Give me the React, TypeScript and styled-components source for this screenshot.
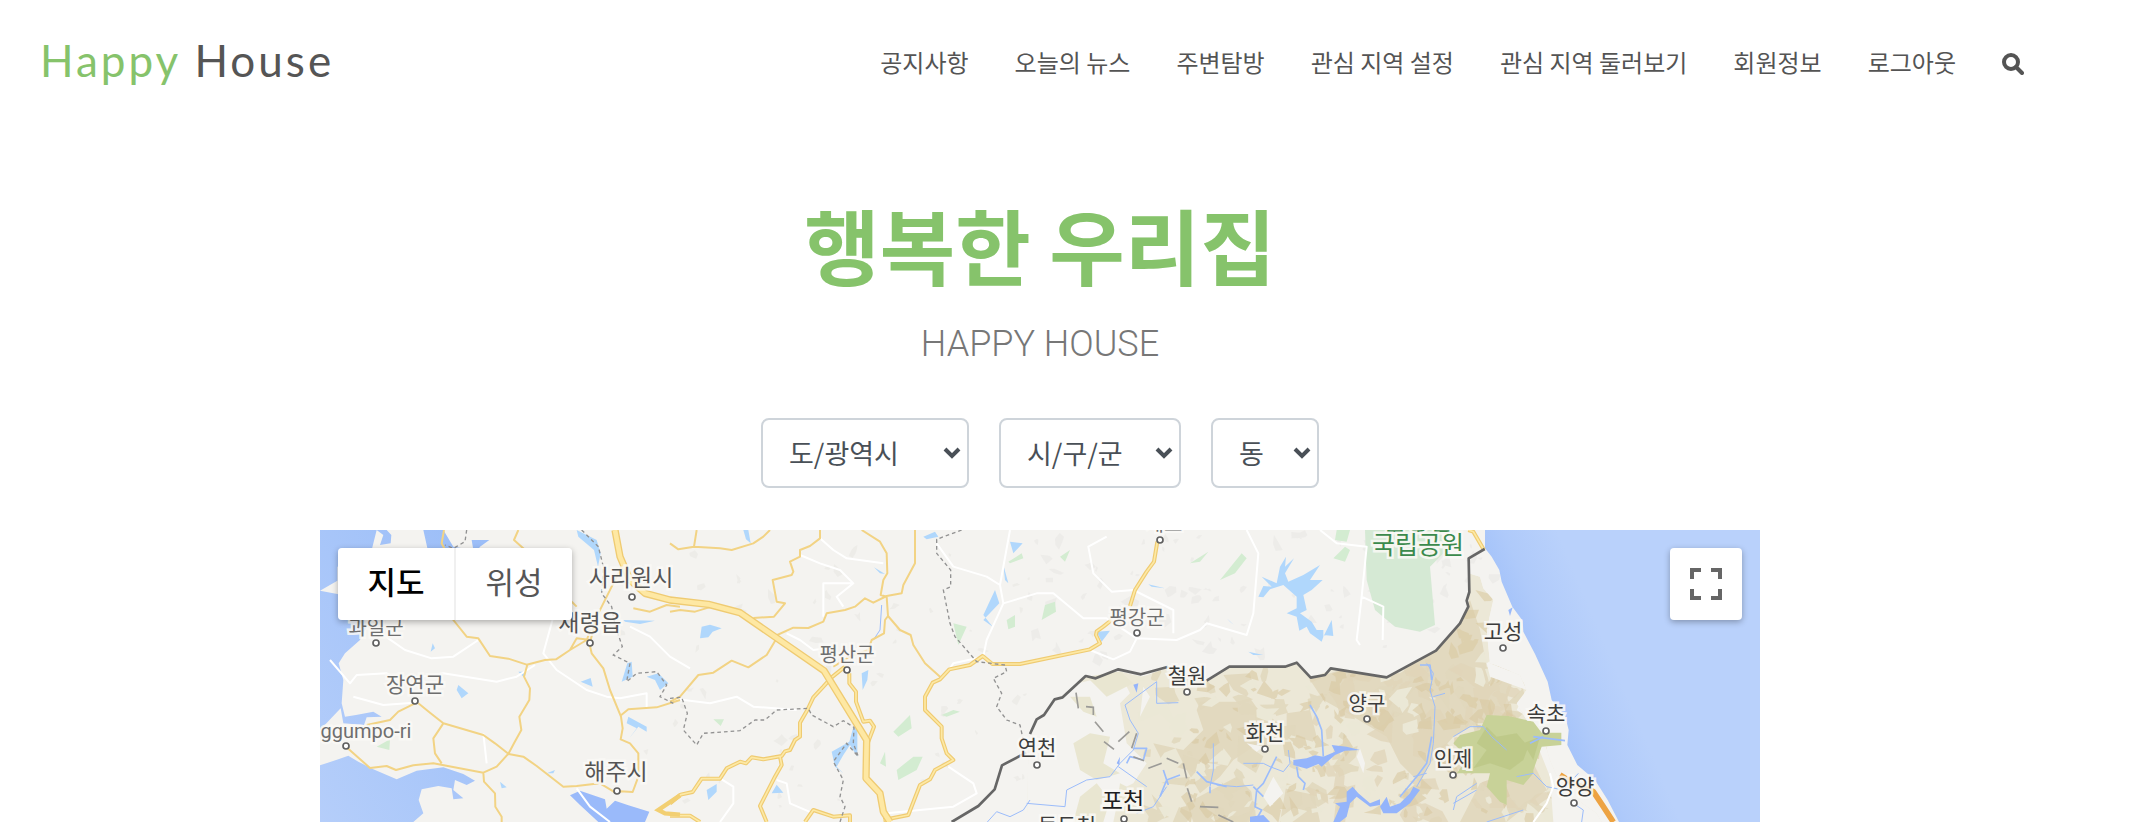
import React from 'react';
import styled, { createGlobalStyle } from 'styled-components';

const GlobalStyle = createGlobalStyle`
  *, *::before, *::after { box-sizing: border-box; }
  body {
    margin: 0;
    background: #fff;
    color: #545454;
    font-family: Roboto, 'Noto Sans CJK KR', sans-serif;
  }
`;

const Page = styled.div`
  display: flex;
  flex-direction: column;
  min-height: 100vh;
  padding-right: 54px;
  overflow: hidden;
`;

const Header = styled.header`
  display: flex;
  align-items: center;
  justify-content: space-between;
  height: 124px;
  padding: 0 56px 0 40px;
`;

const Brand = styled.a`
  padding-bottom: 4px;
  color: #555;
  font-family: Lato, sans-serif;
  font-size: 44px;
  line-height: 56px;
  letter-spacing: 3px;
  text-decoration: none;
  white-space: nowrap;
`;

const BrandAccent = styled.span`
  color: #86c36b;
`;

const Nav = styled.nav`
  display: flex;
  align-items: center;
  gap: 46px;
`;

const NavLink = styled.a`
  color: #545454;
  font-family: 'Noto Sans CJK KR', sans-serif;
  font-size: 24px;
  line-height: 36px;
  text-decoration: none;
  white-space: nowrap;
`;

const SearchButton = styled.button`
  display: flex;
  padding: 4px 0 0;
  border: 0;
  background: none;
  color: #545454;
  cursor: pointer;
`;

const Main = styled.main`
  display: flex;
  flex: 1;
  flex-direction: column;
  align-items: center;
`;

const Title = styled.h1`
  margin: 60px 0 0;
  color: #86c36b;
  font-family: 'Noto Sans CJK KR', sans-serif;
  font-size: 82px;
  font-weight: 700;
  line-height: 120px;
`;

const Subtitle = styled.p`
  margin: 16px 0 0;
  color: #777;
  font-size: 36px;
  font-weight: 300;
  line-height: 48px;
`;

const Filters = styled.form`
  display: flex;
  gap: 30px;
  margin: 50px 0 42px;
`;

const SelectBox = styled.div`
  display: grid;
  align-items: center;
  & > * { grid-area: 1 / 1; }
`;

const Select = styled.select<{ $width: number }>`
  width: ${(p) => p.$width}px;
  height: 70px;
  padding: 0 32px 2px 26px;
  appearance: none;
  border: 2px solid #ced4da;
  border-radius: 8px;
  background: #fff;
  color: #495057;
  font-family: 'Noto Sans CJK KR', sans-serif;
  font-size: 27px;
`;

const SelectArrow = styled.svg`
  justify-self: end;
  margin-right: 8px;
  pointer-events: none;
`;

const MapFrame = styled.section`
  position: relative;
  flex: 1;
  width: 100%;
  max-width: 1440px;
  min-height: 292px;
  overflow: hidden;
  background: #f4f3f0;
`;

const MapCanvas = styled.svg`
  position: absolute;
  top: 0;
  left: 0;
  width: 1440px;
  height: 292px;
`;

const Place = styled.span<{ $x: number; $y: number; $size: number; $color: string }>`
  position: absolute;
  left: ${(p) => p.$x}px;
  top: ${(p) => p.$y}px;
  transform: translate(-50%, -50%);
  color: ${(p) => p.$color};
  font-family: Roboto, 'Noto Sans CJK KR', sans-serif;
  font-size: ${(p) => p.$size}px;
  line-height: 28px;
  white-space: nowrap;
  -webkit-text-stroke: 5px rgba(250, 249, 246, 0.85);
  paint-order: stroke fill;
`;

const MapControls = styled.div`
  position: absolute;
  inset: 18px 18px auto;
  display: flex;
  justify-content: space-between;
`;

const MapTypes = styled.div`
  display: flex;
  border-radius: 4px;
  box-shadow: 0 2px 6px rgba(0, 0, 0, 0.3);
`;

const ControlButton = styled.button<{ $active?: boolean }>`
  height: 72px;
  padding: 0 0 6px;
  border: 0;
  background: #fff;
  color: ${(p) => (p.$active ? '#000' : '#565656')};
  font-family: 'Noto Sans CJK KR', sans-serif;
  font-size: 31px;
  font-weight: ${(p) => (p.$active ? 500 : 400)};
  line-height: 44px;
  cursor: pointer;
`;

const TypeButton = styled(ControlButton)`
  width: 117px;
  &:first-child { width: 116px; border-radius: 4px 0 0 4px; }
  &:last-child { width: 118px; border-left: 2px solid #f0f0f0; border-radius: 0 4px 4px 0; }
`;

const FullscreenButton = styled(ControlButton)`
  display: flex;
  align-items: center;
  justify-content: center;
  width: 72px;
  padding: 0;
  border-radius: 4px;
  box-shadow: 0 2px 6px rgba(0, 0, 0, 0.3);
`;

const NAV = ['공지사항', '오늘의 뉴스', '주변탐방', '관심 지역 설정', '관심 지역 둘러보기', '회원정보', '로그아웃'];

const FILTERS = [
  { label: '도/광역시', width: 208 },
  { label: '시/구/군', width: 182 },
  { label: '동', width: 108 },
];

const DARK = '#3c3c3c';
const MID = '#555';
const SOFT = '#6e6e6e';
const PARK = '#3b8a4c';

type PlaceData = { name: string; x: number; y: number; size: number; color: string; dot?: [number, number] };

const PLACES: PlaceData[] = [
  { name: '사리원시', x: 311, y: 49, size: 23, color: MID, dot: [312, 67] },
  { name: '재령읍', x: 270, y: 94, size: 23, color: MID, dot: [270, 113] },
  { name: '과일군', x: 56, y: 98, size: 20, color: SOFT, dot: [56, 113] },
  { name: '장연군', x: 95, y: 155, size: 21, color: SOFT, dot: [95, 171] },
  { name: 'ggumpo-ri', x: 46, y: 201, size: 20, color: SOFT, dot: [26, 216] },
  { name: '해주시', x: 296, y: 243, size: 23, color: MID, dot: [297, 261] },
  { name: '평산군', x: 527, y: 125, size: 20, color: SOFT, dot: [527, 140] },
  { name: '평강군', x: 817, y: 88, size: 20, color: SOFT, dot: [817, 103] },
  { name: '세포', x: 844, y: -6, size: 20, color: SOFT, dot: [840, 10] },
  { name: '연천', x: 717, y: 218, size: 21, color: DARK, dot: [717, 235] },
  { name: '철원', x: 867, y: 146, size: 21, color: DARK, dot: [867, 162] },
  { name: '양구', x: 1047, y: 174, size: 20, color: DARK, dot: [1047, 189] },
  { name: '화천', x: 945, y: 203, size: 21, color: DARK, dot: [945, 219] },
  { name: '포천', x: 803, y: 272, size: 23, color: '#1f1f1f', dot: [804, 289] },
  { name: '동두천', x: 747, y: 296, size: 21, color: DARK },
  { name: '금강산', x: 1098, y: -8, size: 25, color: PARK },
  { name: '국립공원', x: 1098, y: 16, size: 25, color: PARK },
  { name: '고성', x: 1183, y: 102, size: 21, color: DARK, dot: [1183, 118] },
  { name: '속초', x: 1226, y: 184, size: 21, color: DARK, dot: [1226, 201] },
  { name: '인제', x: 1133, y: 229, size: 21, color: DARK, dot: [1133, 245] },
  { name: '양양', x: 1255, y: 257, size: 21, color: DARK, dot: [1254, 273] },
];

// Irregular angular facets that give the relief its hill shading; a fixed seed keeps them stable.
function facets(seed: number, count: number, x0: number, y0: number, w: number, h: number, size: number) {
  let s = seed;
  const next = () => {
    s = (s * 16807) % 2147483647;
    return s / 2147483647;
  };
  let d = '';
  for (let i = 0; i < count; i += 1) {
    const cx = x0 + next() * w;
    const cy = y0 + next() * h;
    const k = size * (0.3 + next());
    const turn = next() * Math.PI;
    const sides = 4 + Math.floor(next() * 4);
    const points: string[] = [];
    for (let j = 0; j < sides; j += 1) {
      const a = ((j + next() * 0.6) / sides) * Math.PI * 2;
      const r = k * (0.25 + next() * 0.9);
      const px = Math.cos(a) * r * 0.6;
      const py = Math.sin(a) * r;
      points.push(
        `${Math.round(cx + px * Math.cos(turn) - py * Math.sin(turn))} ${Math.round(cy + px * Math.sin(turn) + py * Math.cos(turn))}`,
      );
    }
    d += `M${points.join('L')}Z`;
  }
  return d;
}

const LAND_FACETS = facets(71, 70, 900, 40, 1300, 800, 20);
const NORTH_FACETS = facets(19, 90, 2130, 10, 1400, 380, 28);
const TAN_FACETS = facets(4242, 90, 2450, 420, 1650, 460, 50);
const TAN_COAST = facets(77, 60, 2980, 380, 700, 480, 56);
const PALE_FACETS = facets(933, 120, 2300, 380, 1900, 500, 42);
const DEEP_FACETS = facets(515, 110, 2600, 420, 1050, 460, 34);
const COAST_FACETS = facets(88, 60, 3380, 180, 300, 500, 36);

const SOUTH = 'M2120 900L2125 660L2150 570L2205 510L2300 440L2400 424L2465 440L2540 415L2665 452L2730 410L2895 412L2930 398L2972 445L3035 418L3200 442L3345 363L3420 278L3445 232L3446 130L3480 140L3490 175L3520 210L3500 300L3510 400L3600 435L3620 480L3590 520L3620 570L3670 620L3690 690L3720 760L3760 800L3830 850L3860 900Z';
const SEA_WEST = 'M0 0H370L400 50L460 60L455 30H508L480 50L460 80L400 65L380 110L330 90L310 0H200L214 15L212 40L180 45L190 15L170 0L150 80L52 110V152L0 182Z M0 182L120 205L140 290L120 330L75 370L56 400L70 450L65 520L75 560L108 555L160 545L185 560L140 562L132 585L70 580L62 535L0 600Z M0 706L55 688L85 677L115 695L160 718L230 748L290 722L370 712L430 732L465 752L440 765L405 750L400 780L430 805L400 808L395 775L355 768L305 778L296 810L310 850L280 876H0Z';
const SEA_EAST = 'M3495 0V55L3515 80L3538 120L3545 155L3577 230L3608 272L3610 305L3645 372L3683 455L3695 510L3736 560L3746 600L3742 645L3772 705L3825 750L3863 810L3897 876H4320V0Z';

const ROADS = [
  // western half
  'M372 0L365 40L385 78 M375 230L400 270L440 320L475 325L510 378L565 386L620 404L675 390L708 388L750 360L800 330L812 300 M595 0L582 30L660 100L720 180L770 230 M622 404L612 440L630 475L628 510L598 560L604 600L582 640L566 670L530 710L490 728L340 700L280 706L228 720L200 708L150 714L78 650 M295 520L330 548L370 580L490 615L525 640L566 672L610 680L650 708L730 770L770 768L840 760L890 790L900 784L938 786L955 740L955 670L930 640L902 628L908 595L903 560L870 480L850 415L815 370L808 340 M285 520L235 545L210 570L140 585 M370 580L340 625L345 670L365 700 M490 728L492 755L525 790L526 830L545 860V876 M750 360L770 325L812 330L830 260L910 100 M940 235L990 245L1040 225L1080 230 M903 556L925 538L1010 532L1080 510',
  // eastern half
  'M1130 0L1122 50L1075 58L1050 40 M1122 50L1200 55L1235 60L1300 40L1330 20L1350 0 M1050 245L1080 240L1125 245L1175 230 M1300 264L1362 260L1395 220L1370 215L1358 150L1415 135L1420 125L1410 95L1440 80L1440 60L1470 48L1500 25V0 M1365 318L1420 293L1465 294L1510 275L1520 250L1575 240L1605 230L1635 205L1660 218L1700 198L1745 190L1750 165L1785 100L1785 0 M1625 0L1680 35L1700 70L1702 130L1690 150L1682 195L1700 200L1704 258L1695 270L1692 310L1655 330L1645 360L1590 380L1540 410 M1704 258L1740 300L1772 315L1780 345L1815 400L1860 440 M1050 515L1080 500L1135 435L1180 428L1235 392L1285 412L1340 375L1370 325',
];
const MAJOR_ROADS = 'M1050 820L1082 794L1118 786L1145 746L1200 746L1220 715L1260 695L1278 700L1295 682L1330 688L1385 678L1395 664L1410 660L1425 630L1440 620V578L1462 540L1480 502L1510 470L1535 442L1575 410 M1380 680L1385 705L1365 740L1320 828L1340 876 M1588 430V460L1608 485V515L1630 575L1650 572L1662 590L1643 640 M1050 857H1110L1140 876 M1455 876L1480 840L1540 860L1590 856V876 M1690 870L1765 855L1800 765L1830 748L1845 720L1900 690L1880 670L1865 625V590L1815 540V500L1838 458L1860 448L1888 418L1950 405L1988 378L2017 402L2100 402L2310 358L2340 340L2328 315L2330 304L2350 290L2375 270 M2430 228L2445 180L2480 125L2502 95L2512 35 M3445 0L3460 5L3492 60';
const HIGHWAY = 'M885 0L900 80L930 150L975 190L1050 210L1165 223L1260 248L1512 422L1640 630L1638 745L1680 790L1690 845L1710 876';
const WHITE_ROADS = 'M100 240L205 325L255 360L335 385L400 380L475 330 M30 390L90 460L110 435L200 430L240 450L370 430L530 455L590 440L645 405 M100 500L190 525L280 518 M700 260L670 370L710 420L800 480L860 500L900 505 M900 505L980 490V535 M1050 505L1170 520L1250 500L1300 530L1430 540 M930 290L990 320L1050 380L1110 415 M490 610L500 700 M1500 25L1540 60L1580 85L1690 100 M1440 75L1500 100L1560 120L1600 160L1550 200L1570 230 M1510 260V160L1600 160 M1850 40L1900 110L2000 140L2040 165L2070 0 M2040 165L2050 220L2150 190L2200 190L2290 265L2360 265L2450 325L2570 330L2640 300L2660 280L2780 315L2800 250L2815 70L2780 0 M2360 20L2305 50L2320 130L2375 185L2440 180L2560 240V310 M2310 360L2380 388L2430 365L2450 325 M2050 220L2000 330L1990 380L1900 400L1880 430 M3000 0L3050 40L3140 50L3125 200L3110 330L3120 345 M3125 200L3190 230L3188 330 M1700 850L1900 830L1970 790L1960 760L1885 710 M1200 745L1240 770L1240 820L1200 876 M1370 750L1400 760L1410 820L1480 850 M1400 310L1440 330L1480 360L1520 355 M770 775L810 830L870 876 M3640 876L3680 820L3700 770L3690 730';
const BORDER = 'M1895 876L1975 828L2024 778L2046 706L2118 668 M2130 612L2150 568L2172 555L2204 508L2228 502L2297 438L2327 445L2395 418L2463 433L2545 410 M2660 452L2728 410H2895L2930 398L2972 443L3015 435L3032 415L3200 442L3348 362L3420 280L3445 230L3440 212L3448 186L3446 85L3494 57';
const DASHED = 'M440 0L435 35L400 55L375 45 M785 0L835 50L850 110L845 190L875 230L885 285L907 350L880 375L930 400L920 455L950 430L1010 425L1040 465L1020 500L1060 520 M1050 505L1085 502L1102 550L1090 600L1130 645L1150 610L1260 602L1305 570H1335L1370 540L1465 535L1475 555L1540 590L1570 572L1602 592L1600 640L1615 680L1580 640L1540 695L1570 750L1560 800L1575 830L1560 876 M1925 0L1850 28L1850 70L1892 120V170L1870 180L1890 280L1905 320L1970 395L2055 405L2060 425L2020 445L2045 490L2030 530L2060 570L2100 585L2112 640';

function Relief() {
  return (
    <MapCanvas viewBox="0 0 4320 876" aria-hidden="true">
      <defs>
        <linearGradient id="west" x1="1" x2="0" y1="0" y2="1">
          <stop offset="0" stopColor="#9abdf8" />
          <stop offset="1" stopColor="#b5cefa" />
        </linearGradient>
        <linearGradient id="east" gradientUnits="userSpaceOnUse" x1="3570" y1="420" x2="3840" y2="305">
          <stop offset="0" stopColor="#9dbef9" />
          <stop offset="0.5" stopColor="#afcafa" />
          <stop offset="1" stopColor="#b9d1fb" />
        </linearGradient>
        <clipPath id="south"><path d={SOUTH} /></clipPath>
      </defs>
      <rect width="4320" height="876" fill="#f4f3f0" />
      <path d={LAND_FACETS} fill="#ebeae6" opacity="0.8" />
      <path d={NORTH_FACETS} fill="#ebeae7" opacity="0.8" />
      <g fill="#d3ecd1">
        <path d="M170 650L210 628L208 660Z M1180 568L1212 568L1202 588Z M1720 605L1770 555L1775 595L1735 620Z M1730 720L1780 680L1808 680L1790 720L1735 750Z M1680 700L1695 665L1698 710Z M1865 555L1900 540L1920 545L1880 560Z M1900 280L1940 290L1915 345Z M2060 270L2085 255V290L2065 298Z M2065 95L2105 70L2110 85L2070 100Z M2165 270L2175 225L2205 215L2208 245Z M2700 150L2765 70L2780 85L2745 130Z M2610 100L2665 65L2640 95Z M2220 80L2250 60L2235 95Z M3040 85L3075 50L3090 60L3075 95Z M3050 0H3090L3080 35L3045 30Z" />
        <path d="M3135 0H3360L3380 60L3330 110L3345 285L3300 305L3225 290L3165 240L3140 150Z" fill="#d5e9d4" />
      </g>
      <g clipPath="url(#south)">
        <path d={SOUTH} fill="#ece8d7" />
        <path d="M2630 540L2640 515L2750 515L2790 505L2830 560L2810 600L2850 620L2800 650L2740 690L2700 740L2640 790L2600 720L2530 700L2500 640L2590 660L2650 600Z M2710 435L2790 430L2800 470L2780 500L2740 480Z M2900 550L2970 540L2990 620L2960 660L2900 620Z M2970 450L3060 420L3240 430L3360 350L3420 260L3450 210L3480 300L3500 410L3580 450L3550 540L3470 580L3400 620L3330 700L3300 760L3240 700L3200 620L3100 560L3010 510Z M2600 820L2750 740L2820 810L2780 876H2620Z M3480 760L3640 700L3680 780L3560 876H3420Z M2900 760L2980 780L3000 876H2880Z" fill="#e2d9bf" />
        <path d={TAN_FACETS} fill="#e1d7bc" opacity="0.85" />
        <path d={TAN_COAST} fill="#e0d4b8" opacity="0.75" />
        <path d={PALE_FACETS} fill="#ebe8d6" />
        <path d={DEEP_FACETS} fill="#d8c8a2" opacity="0.6" />
        <path d={COAST_FACETS} fill="#dac9a1" opacity="0.6" />
        <path d="M2120 560L2230 470L2400 430L2430 490L2400 520L2420 640L2480 700L2440 760L2400 780L2380 876H2110Z" fill="#f4f3f0" />
        <path d="M2250 500L2310 500L2330 560L2290 545Z M2260 640L2310 610L2370 620L2350 700L2400 730L2330 750L2280 720Z M2280 800L2330 760L2370 810L2350 876H2260Z M2400 760L2440 780L2420 850L2390 830Z M2300 440L2400 424L2440 460L2360 500Z" fill="#e9e6d1" />
        <path d="M2780 640L2830 650L2810 665Z M3120 655L3135 700L3130 730L3110 680Z M2470 470L2490 500L2460 560Z M2860 740L2890 790L2850 830L2830 800Z M3510 440L3500 400L3530 380L3640 430L3700 520L3700 600L3760 720L3850 876H3700L3690 740L3650 640L3620 560L3590 540L3620 480Z M3480 140L3550 180L3600 300L3560 420L3510 390L3520 210Z" fill="#f4f3f0" />
      </g>
      <path d="M3500 555L3565 558L3640 575L3665 608H3724V645L3665 650L3640 720V730L3610 765L3560 750L3560 825L3540 815L3500 770L3510 730H3410L3425 710L3460 700L3400 640L3420 615L3480 600Z" fill="#c8d298" />
      <path d="M3500 590L3530 620L3590 610L3625 650L3610 690L3570 720L3510 700L3460 715L3500 660L3470 640Z M3610 640L3660 620L3640 690Z" fill="#bcc786" opacity="0.8" />
      <path d={SEA_WEST} fill="url(#west)" fillRule="evenodd" />
      <path d={SEA_EAST} fill="url(#east)" />
      <path d="M750 796L780 782L855 808L860 836L885 812L925 826L988 845L975 876H835L780 825Z M3565 240L3578 232L3570 258Z" fill="#9abafa" />
      <g fill="#b0d7fc">
        <path d="M415 465L445 490L425 505L410 480Z M332 365L345 355L338 340Z M595 425H618L610 440Z M782 455L812 444L818 470Z M770 0L830 30L842 70L834 110L822 60L775 20Z M922 400L935 395L938 440L905 455Z M925 560L980 590V605L955 590L928 625L950 595L920 580Z M980 440L1015 430L1045 460L1020 480L1005 450Z M910 270L1005 272L960 282L915 275Z M1145 290L1170 284L1205 295L1178 305L1165 322L1140 325Z M1270 0H1285L1292 40L1278 28Z M1160 780L1190 762V785L1165 810Z M1355 790L1370 764L1390 788Z M540 755L560 772L545 775Z M680 730L705 720L700 730Z" />
        <path d="M1535 665L1588 635L1600 592L1612 600V680L1590 645L1570 675L1550 710L1570 730L1545 710Z M1625 430L1645 420L1642 450L1628 480Z M1662 112L1695 132L1680 130Z M1810 20L1845 5L1855 20L1820 28Z M2070 35L2108 40L2080 70Z M2050 105L2065 160L2055 150Z M2025 180L2038 220L1990 270L2018 290L1990 255Z" />
        <path d="M2815 200L2830 168L2855 170L2825 140L2870 160L2880 110L2898 80L2895 110L2922 85L2895 130L2905 155L2950 135L3000 105L2970 150L3008 150L2975 180L2950 195L2960 240L2940 250L2975 275L2990 300H3010V320L3035 270L3040 318L3012 315L3005 335L2970 310L2960 290L2938 302L2930 260L2900 250L2930 235L2930 200L2890 165L2850 178L2830 202Z M2485 163L2535 175L2495 170Z M2720 265L2742 285L2730 275Z M2785 365L2830 375L2800 375Z M2330 305L2370 302L2345 335Z" />
      </g>
      <g fill="none" stroke="#9bbcfb" strokeLinejoin="round">
        <path strokeWidth="3" d="M2575 518L2510 520V455L2415 525L2430 570L2455 610L2440 660L2400 700L2370 740L2300 750L2240 780L2235 830L2120 820 M2395 710L2480 770 M2540 770L2500 830L2450 850 M2680 640V720L2670 770 M2690 765L2750 770L2800 765 M2770 700L2830 700L2850 710L2890 725L2910 700L2905 660 M2002 876L2030 845L2070 860L2110 840L2130 810 M1685 225L1680 300L1660 330 M3340 500L3375 490 M3400 620L3450 590L3490 590L3515 620L3560 660 M3590 740L3640 730L3680 770L3730 780L3775 730 M3760 820L3790 840L3785 876 M3320 730L3280 740 M3400 820L3470 780 M3500 876L3610 840 M3320 400L3340 430L3330 480L3345 530L3340 640L3330 700L3290 770 M3470 760L3410 800L3400 840" />
        <path strokeWidth="5" d="M2440 655H2480L2470 690L2430 680L2420 700 M2520 800L2540 750L2580 735 M2545 765L2530 720 M2630 725L2660 755L2720 770 M2670 790V770 M2805 876L2825 840L2805 830L2810 780L2830 760L2860 700L2870 680 M2800 770L2830 800 M2930 710L2935 740L2955 760L2950 780 M2970 525L2990 560L3005 600L3010 680 M3300 405L3330 405L3335 450 M3335 620L3320 700L3290 740L3240 800 M3640 620L3735 632 M3630 640L3670 620" />
      </g>
      <path d="M2920 690L2960 685L2985 676L3010 680L3045 665L3035 645L3080 650L3120 660L3075 662L3045 675L3005 710L2995 702L2960 716L2920 705Z M3045 820L3080 815V785L3098 770L3115 790L3150 820L3180 808L3180 825L3150 830L3110 800L3090 820L3080 860L3060 876H3040L3060 830Z M3180 830L3200 800L3210 830L3240 820L3270 790L3280 770L3300 780L3270 820L3230 850L3190 850Z M2440 464L2455 460L2450 488Z M2390 700L2400 680L2398 705Z M2790 860L2830 855L2850 876H2790Z" fill="#94b4fb" />
      <path d={WHITE_ROADS} fill="none" stroke="#fff" strokeWidth="6" strokeLinejoin="round" />
      {ROADS.map((d) => (
        <path key={d.length} d={d} fill="none" stroke="#f2d384" strokeWidth="6" strokeLinejoin="round" />
      ))}
      <path d={MAJOR_ROADS} fill="none" stroke="#efcb72" strokeWidth="12" strokeLinejoin="round" />
      <path d={MAJOR_ROADS} fill="none" stroke="#fde9a5" strokeWidth="5" strokeLinejoin="round" />
      <path d="M1080 796L1015 840L1035 850L1080 854" fill="none" stroke="#f2cf72" strokeWidth="13" />
      <path d={HIGHWAY} fill="none" stroke="#efcb72" strokeWidth="22" strokeLinejoin="round" />
      <path d={HIGHWAY} fill="none" stroke="#fee8a3" strokeWidth="14" strokeLinejoin="round" />
      <path d="M3720 735L3760 760L3820 785L3850 830L3880 876" fill="none" stroke="#eda343" strokeWidth="17" strokeLinejoin="round" />
      <path d={DASHED} fill="none" stroke="#929292" strokeWidth="4" strokeDasharray="11 9" />
      <path d="M2268 488L2275 535 M2298 530L2320 532V555 M2325 575L2350 605 M2352 635L2382 658 M2395 635L2428 605 M2450 610L2435 655 M2440 680L2472 692 M2485 715L2525 700 M2540 685L2575 700 M2590 700L2600 745 M2602 775L2615 815 M2640 830L2695 832 M2695 855L2740 876" fill="none" stroke="#9c9b98" strokeWidth="5" />
      <path d={BORDER} fill="none" stroke="#666" strokeWidth="8" strokeLinejoin="round" />
      {PLACES.map((p) =>
        p.dot ? (
          <circle key={p.name} cx={p.dot[0] * 3} cy={p.dot[1] * 3} r="9" fill="#fff" stroke="#5f5f5f" strokeWidth="5" />
        ) : null,
      )}
    </MapCanvas>
  );
}

export default function App() {
  return (
    <>
      <GlobalStyle />
      <Page>
        <Header>
          <Brand href="#home">
            <BrandAccent>Happy</BrandAccent> House
          </Brand>
          <Nav>
            {NAV.map((item) => (
              <NavLink key={item} href="#menu">{item}</NavLink>
            ))}
            <SearchButton type="button" aria-label="검색">
              <svg width="22" height="22" viewBox="0 0 22 22" fill="none" stroke="currentColor" aria-hidden="true">
                <circle cx="9" cy="9" r="7" strokeWidth="4" />
                <path d="M14 14L20 20" strokeWidth="4" strokeLinecap="round" />
              </svg>
            </SearchButton>
          </Nav>
        </Header>
        <Main>
          <Title>행복한 우리집</Title>
          <Subtitle>HAPPY HOUSE</Subtitle>
          <Filters>
            {FILTERS.map((f) => (
              <SelectBox key={f.label}>
                <Select $width={f.width} aria-label={f.label}>
                  <option>{f.label}</option>
                </Select>
                <SelectArrow width="18" height="12" viewBox="0 0 18 12" fill="none" aria-hidden="true">
                  <path d="M2 2L9 9L16 2" stroke="#495057" strokeWidth="4" />
                </SelectArrow>
              </SelectBox>
            ))}
          </Filters>
          <MapFrame aria-label="지도">
            <Relief />
            {PLACES.map((p) => (
              <Place key={p.name} $x={p.x} $y={p.y} $size={p.size} $color={p.color}>{p.name}</Place>
            ))}
            <MapControls>
              <MapTypes>
                <TypeButton type="button" $active>지도</TypeButton>
                <TypeButton type="button">위성</TypeButton>
              </MapTypes>
              <FullscreenButton type="button" aria-label="전체 화면">
                <svg width="32" height="32" viewBox="0 0 32 32" fill="#666" aria-hidden="true">
                  <path d="M0 0H11V4H4V11H0Z M21 0H32V11H28V4H21Z M0 21H4V28H11V32H0Z M28 21H32V32H21V28H28Z" />
                </svg>
              </FullscreenButton>
            </MapControls>
          </MapFrame>
        </Main>
      </Page>
    </>
  );
}
